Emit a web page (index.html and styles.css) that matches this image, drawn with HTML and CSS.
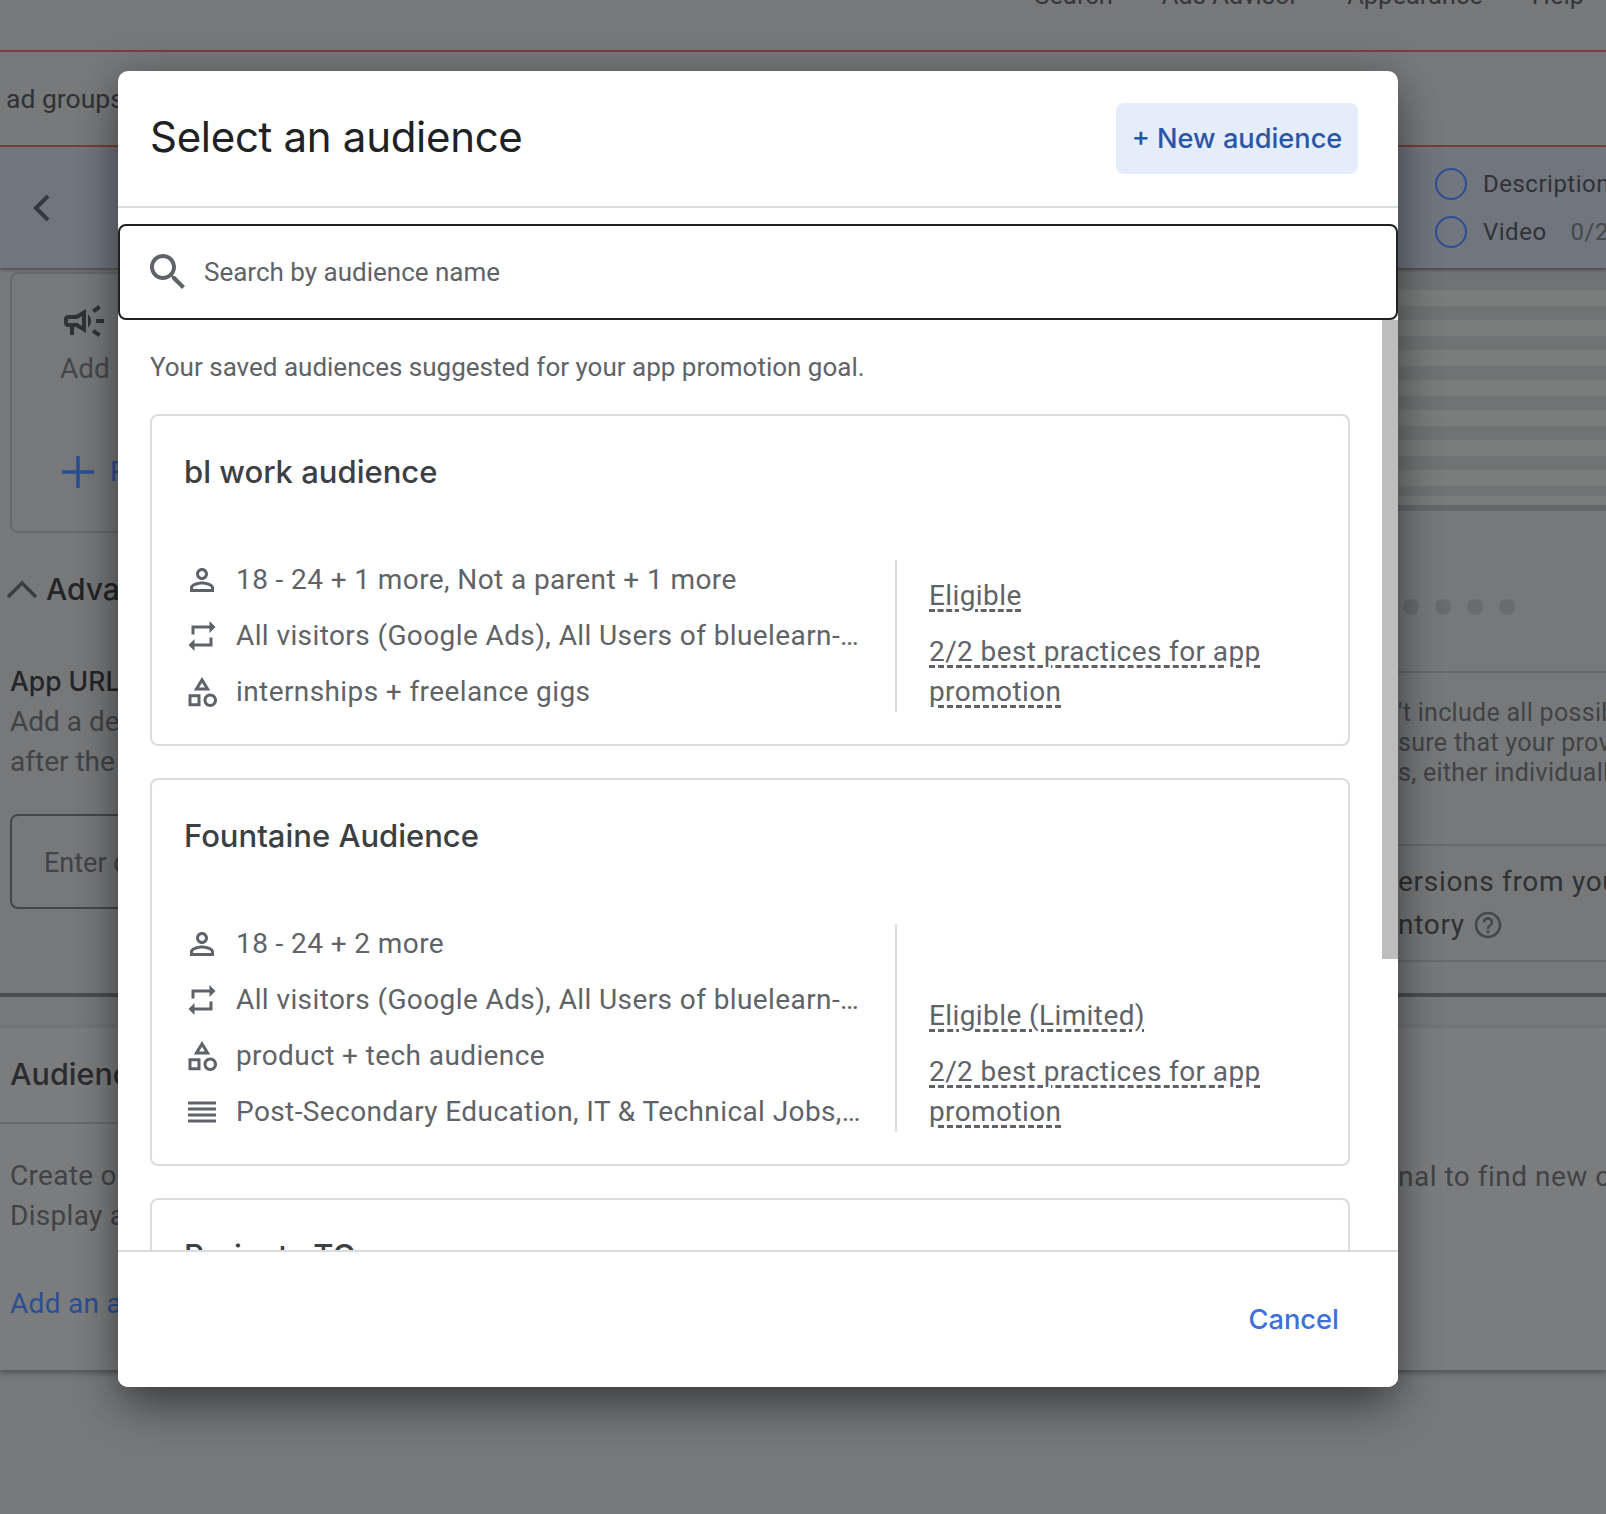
FILE: index.html
```html
<!DOCTYPE html>
<html lang="en">
<head>
    <meta charset="UTF-8">
    <title>Select an audience</title>
    <link rel="stylesheet" href="styles.css">
</head>
<body>
    <!-- page behind the dialog -->
    <div class="page">
        <div class="topbar">
            <span>Search</span>
            <span>Ads Advisor</span>
            <span>Appearance</span>
            <span>Help</span>
        </div>
        <div class="tabs"><span>ad groups</span></div>
        <div class="editorBar">
            <svg class="backIcon" viewBox="0 0 24 36"><path d="M18 6 6 18l12 12"/></svg>
            <div class="checks">
                <div class="check"><i></i><span>Description</span></div>
                <div class="check"><i></i><span>Video</span><span class="count">0/2</span></div>
            </div>
        </div>

        <div class="editorMain">
            <div class="sideLeft">
                <div class="assetCard">
                    <svg class="megaIcon" viewBox="0 0 24 24"><path d="M18 11v2h4v-2h-4zm-2 6.61c.96.71 2.21 1.65 3.2 2.39.4-.53.8-1.07 1.2-1.6-.99-.74-2.24-1.68-3.2-2.4-.4.54-.8 1.08-1.2 1.61zM20.4 5.6c-.4-.53-.8-1.07-1.2-1.6-.99.74-2.24 1.68-3.2 2.4.4.53.8 1.07 1.2 1.6.96-.72 2.21-1.65 3.2-2.4zM4 9c-1.1 0-2 .9-2 2v2c0 1.1.9 2 2 2h1v4h2v-4h1l5 3V6L8 9H4zm5.03 1.71L11 9.53v4.94l-1.97-1.18-.48-.29H4v-2h4.55l.48-.29zM15.5 12c0-1.33-.58-2.53-1.5-3.35v6.69c.92-.81 1.5-2.01 1.5-3.34z"/></svg>
                    <p class="addText">Add</p>
                    <div class="addRow">
                        <svg viewBox="0 0 32 32"><path d="M16 0v32M0 16h32"/></svg>
                        <span>Responsive</span>
                    </div>
                </div>
                <div class="advanced">
                    <svg viewBox="0 0 30 18"><path d="M1 17 15 3l14 14"/></svg>
                    <span>Advanced</span>
                </div>
                <h4 class="urlTitle">App URL</h4>
                <p class="urlText">Add a deep link<br>after the click</p>
                <div class="urlInput">Enter deep link</div>
            </div>
            <div class="sideRight">
                <div class="stripes"></div>
                <div class="dots"><i></i><i></i><i></i><i></i></div>
                <p class="noteText">'t include all possible<br>sure that your provide<br>s, either individually</p>
                <div class="convText">
                    <p>ersions from your</p>
                    <p>ntory <svg viewBox="0 0 24 24"><path d="M11 18h2v-2h-2v2zm1-16C6.48 2 2 6.48 2 12s4.48 10 10 10 10-4.48 10-10S17.52 2 12 2zm0 18c-4.41 0-8-3.59-8-8s3.59-8 8-8 8 3.59 8 8-3.59 8-8 8zm0-14c-2.21 0-4 1.79-4 4h2c0-1.1.9-2 2-2s2 .9 2 2c0 2-3 1.75-3 5h2c0-2.25 3-2.5 3-5 0-2.21-1.79-4-4-4z"/></svg></p>
                </div>
            </div>
        </div>

        <div class="audiencePanel">
            <div class="panelLeft">
                <h3>Audience</h3>
                <p class="panelText">Create or<br>Display a</p>
                <p class="panelLink">Add an audience</p>
            </div>
            <div class="panelRight">
                <p>nal to find new customers</p>
            </div>
        </div>
    </div>

    <!-- dialog -->
    <div class="modal">
        <header class="modalHead">
            <h1>Select an audience</h1>
            <button class="newBtn">+ New audience</button>
        </header>

        <div class="searchBox">
            <svg viewBox="0 0 24 24"><path d="M15.5 14h-.79l-.28-.27C15.41 12.59 16 11.11 16 9.5 16 5.91 13.09 3 9.5 3S3 5.91 3 9.5 5.91 16 9.5 16c1.61 0 3.09-.59 4.23-1.57l.27.28v.79l5 4.99L20.49 19l-4.99-5zm-6 0C7.01 14 5 11.99 5 9.5S7.01 5 9.5 5 14 7.01 14 9.5 11.99 14 9.5 14z"/></svg>
            <span>Search by audience name</span>
        </div>

        <div class="modalBody">
            <div class="listArea">
                <p class="hint">Your saved audiences suggested for your app promotion goal.</p>

                <section class="audCard">
                    <h2>bl work audience</h2>
                    <div class="audInfo">
                        <ul class="audRows">
                            <li>
                                <svg viewBox="0 0 24 24"><path d="M12 6c1.1 0 2 .9 2 2s-.9 2-2 2-2-.9-2-2 .9-2 2-2m0 9c2.7 0 5.8 1.29 6 2v1H6v-.99c.2-.72 3.3-2.01 6-2.01m0-11C9.79 4 8 5.79 8 8s1.79 4 4 4 4-1.79 4-4-1.79-4-4-4zm0 9c-2.67 0-8 1.34-8 4v3h16v-3c0-2.66-5.33-4-8-4z"/></svg>
                                <span>18 - 24 + 1 more, Not a parent + 1 more</span>
                            </li>
                            <li>
                                <svg viewBox="0 0 24 24"><path d="M7 7h10v3l4-4-4-4v3H5v6h2V7zm10 10H7v-3l-4 4 4 4v-3h12v-6h-2v4z"/></svg>
                                <span>All visitors (Google Ads), All Users of bluelearn-app</span>
                            </li>
                            <li>
                                <svg viewBox="0 0 24 24"><path d="M12 2l-5.5 9h11L12 2zm0 3.84L13.93 9h-3.87L12 5.84zM17.5 13c-2.49 0-4.5 2.01-4.5 4.5s2.01 4.5 4.5 4.5 4.5-2.01 4.5-4.5-2.01-4.5-4.5-4.5zm0 7c-1.38 0-2.5-1.12-2.5-2.5s1.12-2.5 2.5-2.5 2.5 1.12 2.5 2.5-1.12 2.5-2.5 2.5zM3 21.5h8v-8H3v8zm2-6h4v4H5v-4z"/></svg>
                                <span>internships + freelance gigs</span>
                            </li>
                        </ul>
                        <div class="audStatus">
                            <p><span class="dashed">Eligible</span></p>
                            <p><span class="dashed">2/2 best practices for app promotion</span></p>
                        </div>
                    </div>
                </section>

                <section class="audCard">
                    <h2>Fountaine Audience</h2>
                    <div class="audInfo">
                        <ul class="audRows">
                            <li>
                                <svg viewBox="0 0 24 24"><path d="M12 6c1.1 0 2 .9 2 2s-.9 2-2 2-2-.9-2-2 .9-2 2-2m0 9c2.7 0 5.8 1.29 6 2v1H6v-.99c.2-.72 3.3-2.01 6-2.01m0-11C9.79 4 8 5.79 8 8s1.79 4 4 4 4-1.79 4-4-1.79-4-4-4zm0 9c-2.67 0-8 1.34-8 4v3h16v-3c0-2.66-5.33-4-8-4z"/></svg>
                                <span>18 - 24 + 2 more</span>
                            </li>
                            <li>
                                <svg viewBox="0 0 24 24"><path d="M7 7h10v3l4-4-4-4v3H5v6h2V7zm10 10H7v-3l-4 4 4 4v-3h12v-6h-2v4z"/></svg>
                                <span>All visitors (Google Ads), All Users of bluelearn-app</span>
                            </li>
                            <li>
                                <svg viewBox="0 0 24 24"><path d="M12 2l-5.5 9h11L12 2zm0 3.84L13.93 9h-3.87L12 5.84zM17.5 13c-2.49 0-4.5 2.01-4.5 4.5s2.01 4.5 4.5 4.5 4.5-2.01 4.5-4.5-2.01-4.5-4.5-4.5zm0 7c-1.38 0-2.5-1.12-2.5-2.5s1.12-2.5 2.5-2.5 2.5 1.12 2.5 2.5-1.12 2.5-2.5 2.5zM3 21.5h8v-8H3v8zm2-6h4v4H5v-4z"/></svg>
                                <span>product + tech audience</span>
                            </li>
                            <li>
                                <svg viewBox="0 0 24 24"><path d="M2.7 15h18.6v-2H2.7v2zm0 4h18.6v-2H2.7v2zm0-8h18.6V9H2.7v2zm0-6v2h18.6V5H2.7z"/></svg>
                                <span>Post-Secondary Education, IT &amp; Technical Jobs, Career</span>
                            </li>
                        </ul>
                        <div class="audStatus">
                            <p><span class="dashed">Eligible (Limited)</span></p>
                            <p><span class="dashed">2/2 best practices for app promotion</span></p>
                        </div>
                    </div>
                </section>

                <section class="audCard">
                    <h2>Projects TG</h2>
                </section>
            </div>
            <div class="scrollTrack"><div class="scrollThumb"></div></div>
        </div>

        <footer class="modalFoot">
            <button class="cancelBtn">Cancel</button>
        </footer>
    </div>
</body>
</html>
```

FILE: styles.css
```css
* {
    box-sizing: border-box;
    margin: 0;
    padding: 0;
}

body {
    width: 1606px;
    height: 1514px;
    overflow: hidden;
    position: relative;
    background-color: #76787a;
    font-family: Roboto, Arial, sans-serif;
    color: #404245;
}

/* page behind the dialog */
.page {
    display: flex;
    flex-direction: column;
    height: 1514px;
}

.topbar {
    height: 52px;
    flex: none;
    overflow: hidden;
    display: flex;
    justify-content: flex-end;
    gap: 49px;
    padding-right: 22px;
    border-bottom: 2px solid #7b3f3b;
    font-size: 25.5px;
    line-height: 30px;
    color: #35373a;
}

.topbar span {
    margin-top: -20px;
}

.tabs {
    height: 95px;
    flex: none;
    padding: 29px 0 0 6px;
    border-bottom: 2px solid #7b3f3b;
    background-color: #77797b;
    font-size: 26.5px;
    line-height: 36px;
    color: #303235;
}

.editorBar {
    height: 121px;
    flex: none;
    display: flex;
    justify-content: space-between;
    padding: 18px 0 0 30px;
    background-color: #70757e;
    box-shadow: 0 2px 3px rgba(0, 0, 0, .35);
    position: relative;
}

.backIcon {
    width: 24px;
    height: 36px;
    margin-top: 25px;
    fill: none;
    stroke: #35383d;
    stroke-width: 4;
}

.checks {
    width: 171px;
    display: flex;
    flex-direction: column;
    gap: 16px;
    margin-top: 3px;
}

.check {
    display: flex;
    align-items: center;
    gap: 16px;
    height: 32px;
    font-size: 24px;
    letter-spacing: .5px;
    white-space: nowrap;
    color: #303236;
}

.check i {
    width: 32px;
    height: 32px;
    flex: none;
    border: 2px solid #2b4f92;
    border-radius: 50%;
}

.check .count {
    margin-left: 8px;
    color: #45484c;
}

.editorMain {
    height: 729px;
    flex: none;
    display: flex;
    justify-content: space-between;
    border-bottom: 4px solid #4c4d4f;
    white-space: nowrap;
}

.sideLeft {
    width: 118px;
    overflow: hidden;
    padding: 4px 0 0 10px;
}

.assetCard {
    width: 200px;
    height: 261px;
    border: 2px solid #66686a;
    border-radius: 8px;
    padding: 23px 0 0 48px;
}

.megaIcon {
    display: block;
    width: 48px;
    height: 48px;
    fill: #303235;
}

.addText {
    margin-top: 5px;
    font-size: 28px;
    line-height: 38px;
    color: #45474a;
}

.addRow {
    display: flex;
    align-items: center;
    gap: 16px;
    margin: 67px 0 0 2px;
    font-size: 28px;
    color: #2b4f92;
}

.addRow svg {
    width: 32px;
    height: 32px;
    flex: none;
    fill: none;
    stroke: #2b4f92;
    stroke-width: 3.5;
}

.advanced {
    display: flex;
    align-items: center;
    gap: 9px;
    margin: 36px 0 0 -3px;
    font-family: Inter, sans-serif;
    font-size: 30px;
    line-height: 40px;
    font-weight: 500;
    color: #242527;
}

.advanced svg {
    width: 30px;
    height: 18px;
    flex: none;
    fill: none;
    stroke: #3b3d40;
    stroke-width: 3.5;
}

.urlTitle {
    margin-top: 52px;
    font-family: Inter, sans-serif;
    font-size: 26.5px;
    line-height: 40px;
    font-weight: 500;
    color: #242527;
}

.urlText {
    margin-top: 1px;
    font-size: 28px;
    line-height: 39.5px;
    color: #414346;
}

.urlInput {
    width: 200px;
    height: 95px;
    margin-top: 33px;
    padding: 29px 0 0 32px;
    border: 2px solid #444648;
    border-radius: 8px;
    font-size: 27px;
    line-height: 36px;
    color: #414346;
}

.sideRight {
    width: 208px;
    overflow: hidden;
}

.stripes {
    height: 243px;
    border-top: 8px solid #707273;
    border-bottom: 6px solid #656769;
    background:
        linear-gradient(#7a7c7c, #7a7c7c) bottom / 100% 9px no-repeat,
        repeating-linear-gradient(180deg, #707273 0 14px, #7a7c7c 14px 30px);
}

.dots {
    display: flex;
    gap: 16px;
    margin-top: 88px;
    padding-left: 5px;
}

.dots i {
    width: 16px;
    height: 16px;
    border-radius: 50%;
    background-color: #696b6d;
}

.noteText {
    margin-top: 56px;
    padding-top: 25px;
    border-top: 2px solid #68696b;
    height: 173px;
    font-size: 25px;
    line-height: 30px;
    letter-spacing: .3px;
    color: #414346;
}

.convText {
    height: 118px;
    padding-top: 14px;
    border-top: 2px solid #68696b;
    border-bottom: 2px solid #68696b;
    font-size: 28px;
    line-height: 43px;
    letter-spacing: .7px;
    color: #2f3133;
}

.convText svg {
    width: 32px;
    height: 32px;
    vertical-align: -7px;
    fill: #45474a;
}

.audiencePanel {
    height: 344px;
    flex: none;
    margin-top: 29px;
    display: flex;
    justify-content: space-between;
    background-color: #7b7c7e;
    border-top: 2px solid #727375;
    box-shadow: 0 3px 5px rgba(0, 0, 0, .3);
    white-space: nowrap;
}

.panelLeft {
    width: 118px;
    overflow: hidden;
}

.panelLeft h3 {
    height: 96px;
    padding: 24px 0 0 10px;
    border-bottom: 2px solid #68696b;
    font-family: Inter, sans-serif;
    font-size: 30.5px;
    line-height: 44px;
    font-weight: 500;
    color: #2a2b2d;
}

.panelText {
    margin-top: 32px;
    padding-left: 10px;
    font-size: 28px;
    line-height: 40px;
    letter-spacing: .3px;
    color: #414346;
}

.panelLink {
    margin-top: 48px;
    padding-left: 10px;
    font-size: 28px;
    line-height: 40px;
    letter-spacing: .3px;
    color: #2b4f92;
}

.panelRight {
    width: 208px;
    overflow: hidden;
}

.panelRight p {
    margin-top: 129px;
    font-size: 28px;
    line-height: 40px;
    letter-spacing: .5px;
    color: #414346;
}

/* dialog */
.modal {
    position: absolute;
    left: 118px;
    top: 71px;
    width: 1280px;
    height: 1316px;
    display: flex;
    flex-direction: column;
    background-color: #fff;
    border-radius: 10px;
    box-shadow: 0 24px 48px -8px rgba(0, 0, 0, .42), 0 4px 40px rgba(0, 0, 0, .25);
}

.modalHead {
    height: 137px;
    flex: none;
    display: flex;
    justify-content: space-between;
    align-items: flex-start;
    padding: 32px 40px 0 32px;
    border-bottom: 2px solid #dadce0;
}

.modalHead h1 {
    font-family: Inter, sans-serif;
    font-size: 42px;
    line-height: 68px;
    font-weight: 400;
    letter-spacing: -.3px;
    color: #202124;
}

.newBtn {
    width: 242px;
    height: 71px;
    border: 0;
    border-radius: 8px;
    background-color: #e6edfa;
    font-family: Inter, sans-serif;
    font-size: 27.2px;
    font-weight: 500;
    color: #2a56a8;
}

.searchBox {
    height: 96px;
    flex: none;
    margin-top: 16px;
    display: flex;
    align-items: center;
    gap: 12px;
    padding-left: 24px;
    border: 2px solid #202124;
    border-radius: 8px;
    background-color: #fff;
    font-size: 26px;
    color: #5f6368;
}

.searchBox svg {
    width: 48px;
    height: 48px;
    fill: #5f6368;
}

.modalBody {
    flex: 1;
    min-height: 0;
    display: flex;
    overflow: hidden;
}

.listArea {
    flex: 1;
    padding: 27px 32px 0 32px;
}

.hint {
    font-size: 26px;
    line-height: 40px;
    color: #5f6368;
    margin-bottom: 27px;
}

.audCard {
    border: 2px solid #dadce0;
    border-radius: 8px;
    padding: 32px;
    margin-bottom: 32px;
}

.audCard h2 {
    font-family: Inter, sans-serif;
    font-size: 31px;
    line-height: 48px;
    font-weight: 500;
    color: #3c4043;
}

.audInfo {
    display: flex;
    margin-top: 64px;
    font-size: 28px;
    line-height: 40px;
    letter-spacing: .4px;
    color: #5f6368;
}

.audRows {
    list-style: none;
    width: 711px;
    flex: none;
    padding-right: 32px;
    display: flex;
    flex-direction: column;
    gap: 16px;
}

.audRows li {
    display: flex;
    align-items: center;
    gap: 16px;
    height: 40px;
}

.audRows svg {
    width: 36px;
    height: 36px;
    flex: none;
    fill: #5f6368;
}

.audRows span {
    white-space: nowrap;
    overflow: hidden;
    text-overflow: ellipsis;
}

.audStatus {
    flex: 1;
    display: flex;
    flex-direction: column;
    justify-content: flex-end;
    gap: 16px;
    padding-left: 32px;
    border-left: 2px solid #dadce0;
}

.dashed {
    text-decoration: underline dashed #5f6368 3px;
    text-underline-offset: 4px;
}

.scrollTrack {
    width: 16px;
    flex: none;
}

.scrollThumb {
    height: 639px;
    background-color: #bdbdbd;
}

.modalFoot {
    height: 137px;
    flex: none;
    display: flex;
    justify-content: flex-end;
    align-items: flex-start;
    padding: 48px 59px 0 0;
    border-top: 2px solid #dadce0;
    background-color: #fff;
    border-radius: 0 0 10px 10px;
}

.cancelBtn {
    border: 0;
    background: none;
    font-family: Inter, sans-serif;
    font-size: 27.3px;
    line-height: 40px;
    font-weight: 500;
    color: #3f70da;
}
```
